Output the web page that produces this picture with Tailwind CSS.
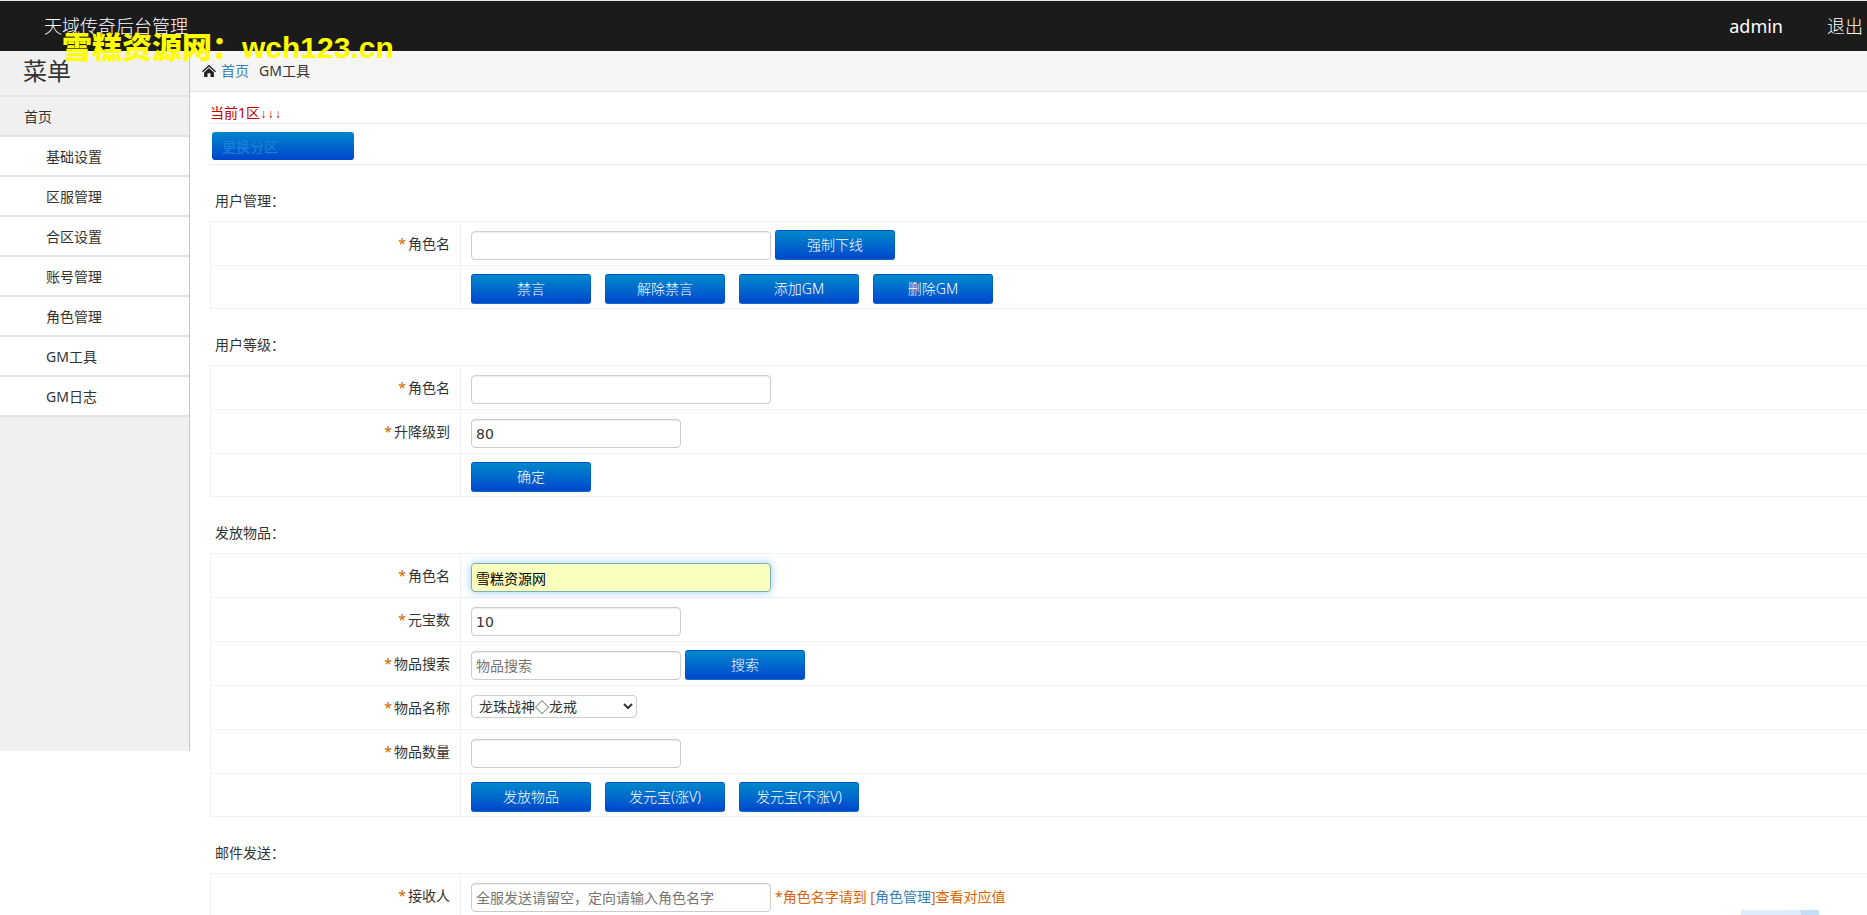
<!DOCTYPE html>
<html lang="zh-CN">
<head>
<meta charset="utf-8">
<title>天域传奇后台管理</title>
<script src="https://cdn.jsdelivr.net/npm/@tailwindcss/browser@4"></script>
</head>
<body class="relative h-screen overflow-hidden bg-white font-['Noto_Sans','Noto_Sans_CJK_SC',sans-serif] text-sm text-[#333]">
<header class="flex h-[51px] items-center justify-between border-t border-[#e4ebe8] bg-[#1b1b1b] pr-1 pl-11 text-lg leading-none text-white">
  <h1 class="font-light">天域传奇后台管理</h1>
  <nav class="flex gap-11">
    <a href="#">admin</a>
    <a href="#" class="font-light">退出</a>
  </nav>
</header>
<div class="flex items-start">
  <aside class="min-h-[700px] w-[190px] shrink-0 border-r border-[#c4c4c4] bg-[#f0f0f0]">
    <h2 class="h-[46px] border-b-2 border-[#e5e5e5] pl-[23px] text-2xl leading-10">菜单</h2>
    <nav class="leading-10">
      <a href="#" class="block h-10 border-b-2 border-[#e3e3e3] pl-6">首页</a>
      <a href="#" class="block h-10 border-b-2 border-[#e3e3e3] bg-white pl-[46px]">基础设置</a>
      <a href="#" class="block h-10 border-b-2 border-[#e3e3e3] bg-white pl-[46px]">区服管理</a>
      <a href="#" class="block h-10 border-b-2 border-[#e3e3e3] bg-white pl-[46px]">合区设置</a>
      <a href="#" class="block h-10 border-b-2 border-[#e3e3e3] bg-white pl-[46px]">账号管理</a>
      <a href="#" class="block h-10 border-b-2 border-[#e3e3e3] bg-white pl-[46px]">角色管理</a>
      <a href="#" class="block h-10 border-b-2 border-[#e3e3e3] bg-white pl-[46px]">GM工具</a>
      <a href="#" class="block h-10 border-b-2 border-[#e3e3e3] bg-white pl-[46px]">GM日志</a>
    </nav>
  </aside>
  <main class="min-w-0 flex-1">
    <nav class="flex h-[41px] items-center border-b border-[#e5e5e5] bg-[#f5f5f5] pl-3">
      <svg class="mr-[5px] h-3.5 w-3.5" viewBox="0 0 14 14" fill="#222"><path d="M7 0.8 14 7.3 13.1 8.3 7 2.7 0.9 8.3 0 7.3z"/><path d="M7 3.9 11.9 8.4V13H8.5V9.3H5.5V13H2.1V8.4z"/></svg>
      <a href="#" class="mr-2.5 text-[#3a7fb5]">首页</a>
      <span>GM工具</span>
    </nav>
    <div class="pl-5">
      <p class="h-8 border-b border-[#eee] pt-[11px] leading-5 text-[#c00000]">当前1区<span class="font-['Liberation_Mono',monospace] text-xs">↓↓↓</span></p>
      <div class="h-[41px] border-b border-[#eee] pt-2 pl-0.5">
        <a href="#" class="block h-7 w-[142px] rounded-[3px] bg-linear-to-b from-[#0085cc] to-[#0044cc] pl-2.5 leading-[30px] text-[#1c84d8]">更换分区</a>
      </div>

      <h3 class="h-14 pt-[26px] pl-[5px] leading-5">用户管理：</h3>
      <table class="w-full table-fixed border-collapse border border-r-0 border-[#f0f0f0]">
        <colgroup><col class="w-[250px]"><col></colgroup>
        <tr class="h-11 border-b border-[#f0f0f0]">
          <th class="border-r border-[#f0f0f0] pr-2.5 text-right font-normal"><label for="u1" class="inline-flex gap-0.5"><span class="text-[#c60]">*</span>角色名</label></th>
          <td class="pl-2.5"><div class="flex items-end gap-1 pt-[3px]">
            <input id="u1" class="h-[29px] w-[300px] rounded-sm border border-[#ccc] px-1 shadow-[inset_0_1px_1px_rgba(0,0,0,0.075)]">
            <button class="h-[30px] w-[120px] rounded-[3px] border border-[#0055b0]/40 bg-linear-to-b from-[#0088cc] to-[#0044cc] font-light text-white">强制下线</button>
          </div></td>
        </tr>
        <tr class="h-[43px]">
          <th class="border-r border-[#f0f0f0]"></th>
          <td class="pl-2.5"><div class="flex gap-3.5 pt-1">
            <button class="h-[30px] w-[120px] rounded-[3px] border border-[#0055b0]/40 bg-linear-to-b from-[#0088cc] to-[#0044cc] font-light text-white">禁言</button>
            <button class="h-[30px] w-[120px] rounded-[3px] border border-[#0055b0]/40 bg-linear-to-b from-[#0088cc] to-[#0044cc] font-light text-white">解除禁言</button>
            <button class="h-[30px] w-[120px] rounded-[3px] border border-[#0055b0]/40 bg-linear-to-b from-[#0088cc] to-[#0044cc] font-light text-white">添加GM</button>
            <button class="h-[30px] w-[120px] rounded-[3px] border border-[#0055b0]/40 bg-linear-to-b from-[#0088cc] to-[#0044cc] font-light text-white">删除GM</button>
          </div></td>
        </tr>
      </table>

      <h3 class="h-14 pt-[26px] pl-[5px] leading-5">用户等级：</h3>
      <table class="w-full table-fixed border-collapse border border-r-0 border-[#f0f0f0]">
        <colgroup><col class="w-[250px]"><col></colgroup>
        <tr class="h-11 border-b border-[#f0f0f0]">
          <th class="border-r border-[#f0f0f0] pr-2.5 text-right font-normal"><label for="u2" class="inline-flex gap-0.5"><span class="text-[#c60]">*</span>角色名</label></th>
          <td class="pl-2.5"><div class="flex pt-1">
            <input id="u2" class="h-[29px] w-[300px] rounded-sm border border-[#ccc] px-1 shadow-[inset_0_1px_1px_rgba(0,0,0,0.075)]">
          </div></td>
        </tr>
        <tr class="h-11 border-b border-[#f0f0f0]">
          <th class="border-r border-[#f0f0f0] pr-2.5 text-right font-normal"><label for="lv" class="inline-flex gap-0.5"><span class="text-[#c60]">*</span>升降级到</label></th>
          <td class="pl-2.5"><div class="flex pt-1">
            <input id="lv" value="80" class="h-[29px] w-[210px] rounded-sm border border-[#ccc] px-1 font-['DejaVu_Sans','Noto_Sans_CJK_SC',sans-serif] shadow-[inset_0_1px_1px_rgba(0,0,0,0.075)]">
          </div></td>
        </tr>
        <tr class="h-[43px]">
          <th class="border-r border-[#f0f0f0]"></th>
          <td class="pl-2.5"><div class="flex pt-1">
            <button class="h-[30px] w-[120px] rounded-[3px] border border-[#0055b0]/40 bg-linear-to-b from-[#0088cc] to-[#0044cc] font-light text-white">确定</button>
          </div></td>
        </tr>
      </table>

      <h3 class="h-14 pt-[26px] pl-[5px] leading-5">发放物品：</h3>
      <table class="w-full table-fixed border-collapse border border-r-0 border-[#f0f0f0]">
        <colgroup><col class="w-[250px]"><col></colgroup>
        <tr class="h-11 border-b border-[#f0f0f0]">
          <th class="border-r border-[#f0f0f0] pr-2.5 text-right font-normal"><label for="u3" class="inline-flex gap-0.5"><span class="text-[#c60]">*</span>角色名</label></th>
          <td class="pl-2.5"><div class="flex pt-1">
            <input id="u3" value="雪糕资源网" autofocus class="h-[29px] w-[300px] rounded-sm border border-[#7fb0b0] bg-[#faffbd] px-1 text-black shadow-[0_0_8px_rgba(82,168,236,0.6)] outline-none">
          </div></td>
        </tr>
        <tr class="h-11 border-b border-[#f0f0f0]">
          <th class="border-r border-[#f0f0f0] pr-2.5 text-right font-normal"><label for="yb" class="inline-flex gap-0.5"><span class="text-[#c60]">*</span>元宝数</label></th>
          <td class="pl-2.5"><div class="flex pt-1">
            <input id="yb" value="10" class="h-[29px] w-[210px] rounded-sm border border-[#ccc] px-1 font-['DejaVu_Sans','Noto_Sans_CJK_SC',sans-serif] shadow-[inset_0_1px_1px_rgba(0,0,0,0.075)]">
          </div></td>
        </tr>
        <tr class="h-11 border-b border-[#f0f0f0]">
          <th class="border-r border-[#f0f0f0] pr-2.5 text-right font-normal"><label for="ss" class="inline-flex gap-0.5"><span class="text-[#c60]">*</span>物品搜索</label></th>
          <td class="pl-2.5"><div class="flex items-end gap-1 pt-[3px]">
            <input id="ss" placeholder="物品搜索" class="h-[29px] w-[210px] rounded-sm border border-[#ccc] px-1 shadow-[inset_0_1px_1px_rgba(0,0,0,0.075)] placeholder:text-[#757575]">
            <button class="h-[30px] w-[120px] rounded-[3px] border border-[#0055b0]/40 bg-linear-to-b from-[#0088cc] to-[#0044cc] font-light text-white">搜索</button>
          </div></td>
        </tr>
        <tr class="h-11 border-b border-[#f0f0f0]">
          <th class="border-r border-[#f0f0f0] pr-2.5 text-right font-normal"><label for="mc" class="inline-flex gap-0.5"><span class="text-[#c60]">*</span>物品名称</label></th>
          <td class="pl-2.5"><div class="flex pb-0.5">
            <select id="mc" class="h-[23px] w-[166px] rounded-sm border border-[#ccc] bg-white pl-[3px] leading-5"><option>龙珠战神◇龙戒</option></select>
          </div></td>
        </tr>
        <tr class="h-11 border-b border-[#f0f0f0]">
          <th class="border-r border-[#f0f0f0] pr-2.5 text-right font-normal"><label for="sl" class="inline-flex gap-0.5"><span class="text-[#c60]">*</span>物品数量</label></th>
          <td class="pl-2.5"><div class="flex pt-1">
            <input id="sl" class="h-[29px] w-[210px] rounded-sm border border-[#ccc] px-1 shadow-[inset_0_1px_1px_rgba(0,0,0,0.075)]">
          </div></td>
        </tr>
        <tr class="h-[43px]">
          <th class="border-r border-[#f0f0f0]"></th>
          <td class="pl-2.5"><div class="flex gap-3.5 pt-1">
            <button class="h-[30px] w-[120px] rounded-[3px] border border-[#0055b0]/40 bg-linear-to-b from-[#0088cc] to-[#0044cc] font-light text-white">发放物品</button>
            <button class="h-[30px] w-[120px] rounded-[3px] border border-[#0055b0]/40 bg-linear-to-b from-[#0088cc] to-[#0044cc] font-light text-white">发元宝(涨V)</button>
            <button class="h-[30px] w-[120px] rounded-[3px] border border-[#0055b0]/40 bg-linear-to-b from-[#0088cc] to-[#0044cc] font-light text-white">发元宝(不涨V)</button>
          </div></td>
        </tr>
      </table>

      <h3 class="h-14 pt-[26px] pl-[5px] leading-5">邮件发送：</h3>
      <table class="w-full table-fixed border-collapse border border-r-0 border-[#f0f0f0]">
        <colgroup><col class="w-[250px]"><col></colgroup>
        <tr class="h-11 border-b border-[#f0f0f0]">
          <th class="border-r border-[#f0f0f0] pr-2.5 text-right font-normal"><label for="to" class="inline-flex gap-0.5"><span class="text-[#c60]">*</span>接收人</label></th>
          <td class="pl-2.5"><div class="flex items-center gap-1 pt-1">
            <input id="to" placeholder="全服发送请留空，定向请输入角色名字" class="h-[29px] w-[300px] rounded-sm border border-[#ccc] px-1 shadow-[inset_0_1px_1px_rgba(0,0,0,0.075)] placeholder:text-[#757575]">
            <span class="pb-0.5 text-[#d96400]">*角色名字请到 [<a href="#" class="text-[#3a7fb5]">角色管理</a>]查看对应值</span>
          </div></td>
        </tr>
      </table>
    </div>
  </main>
</div>
<p class="pointer-events-none absolute top-[30px] left-[62px] font-['Liberation_Sans','Noto_Sans_CJK_SC',sans-serif] text-3xl leading-9 font-black whitespace-nowrap text-[#ffff00]">雪糕资源网：wch123.cn</p>
<div class="absolute right-12 bottom-0 flex h-[5px] w-[78px] justify-end bg-[#dcecfb]"><span class="w-[18px] bg-[#c3def5]"></span></div>
<script>
  const role = document.getElementById('u3');
  role.focus();
  role.setSelectionRange(role.value.length, role.value.length);
</script>
</body>
</html>
